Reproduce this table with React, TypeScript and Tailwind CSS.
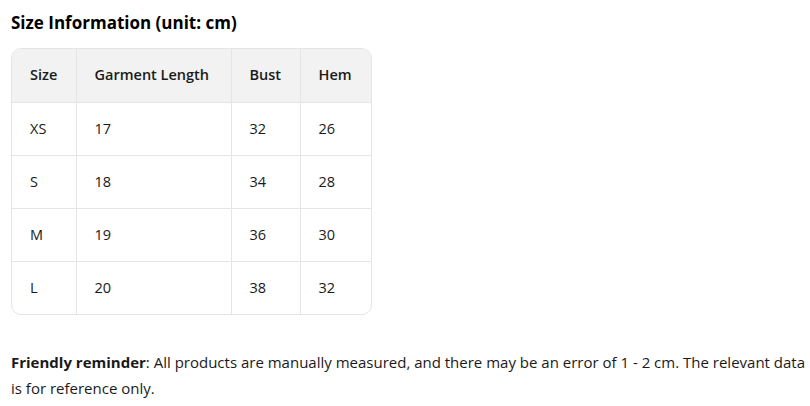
const ROWS = [
  ['XS', '17', '32', '26'],
  ['S', '18', '34', '28'],
  ['M', '19', '36', '30'],
  ['L', '20', '38', '32'],
];

export default function App() {
  return (
    <div className="w-[810px] h-[406px] bg-white text-[#1a1a1a] px-[11px] pt-[11px]" style={{ fontFamily: '"Open Sans", "Noto Sans", sans-serif' }}>
      <h2 className="text-[17px] font-bold leading-[24px] text-black">Size Information (unit: cm)</h2>

      <div className="mt-[13px] w-[361px] border border-[#e5e5e5] rounded-[10px] overflow-hidden">
        <table className="w-full border-collapse text-[14.5px]">
          <thead>
            <tr className="bg-[#f2f2f2] h-[53px]">
              <th className="w-[64px] text-left font-semibold pl-[18px] border-r border-b border-[#e5e5e5]">Size</th>
              <th className="w-[155px] text-left font-semibold pl-[18px] border-r border-b border-[#e5e5e5]">Garment Length</th>
              <th className="w-[69px] text-left font-semibold pl-[18px] border-r border-b border-[#e5e5e5]">Bust</th>
              <th className="text-left font-semibold pl-[18px] border-b border-[#e5e5e5]">Hem</th>
            </tr>
          </thead>
          <tbody>
            {ROWS.map((r, i) => (
              <tr key={r[0]} className="h-[53px]">
                {r.map((c, j) => (
                  <td
                    key={j}
                    className={`pl-[18px] ${j < 3 ? 'border-r' : ''} ${i < ROWS.length - 1 ? 'border-b' : ''} border-[#e5e5e5]`}
                  >
                    {c}
                  </td>
                ))}
              </tr>
            ))}
          </tbody>
        </table>
      </div>

      <p className="mt-[34px] text-[15px] leading-[26px] w-[799px]">
        <span className="font-bold">Friendly reminder</span>: All products are manually measured, and there may be an error of 1 - 2 cm. The relevant data is for reference only.
      </p>
    </div>
  );
}
